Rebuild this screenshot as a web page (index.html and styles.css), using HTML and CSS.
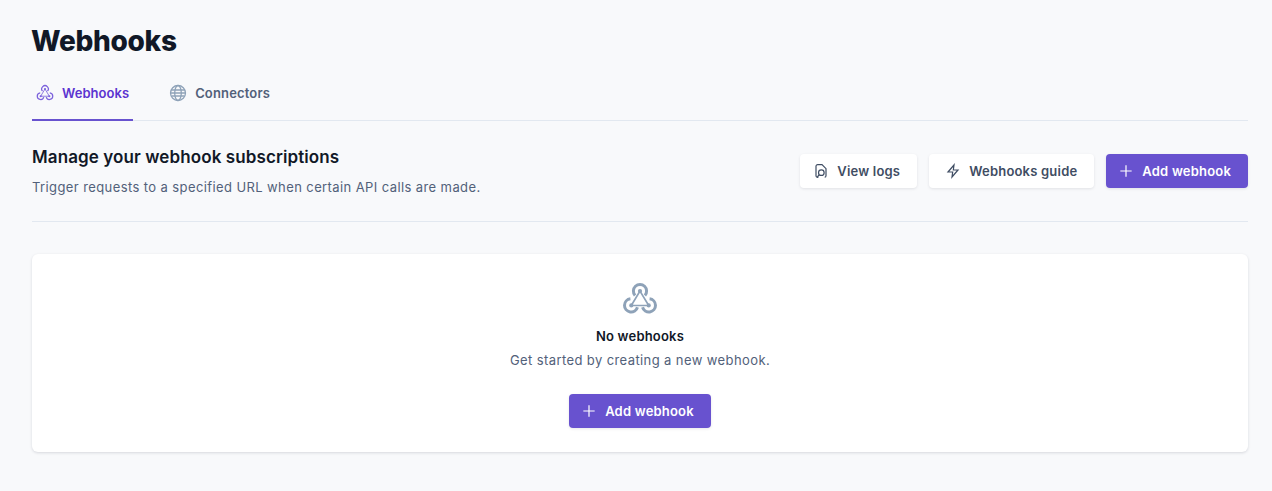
FILE: index.html
```html
<!DOCTYPE html>
<html lang="en">
<head>
<meta charset="utf-8">
<title>Webhooks</title>
<link rel="stylesheet" href="styles.css">
</head>
<body>
<svg class="defs" width="0" height="0" aria-hidden="true">
  <symbol id="hook" viewBox="0 0 24 24">
    <path d="M8.7 9.6a4.4 4.4 0 1 1 6.6 0" />
    <path d="M5.6 11.9a4.4 4.4 0 1 0 4.7 5.6" />
    <path d="M18.4 11.9a4.4 4.4 0 1 1-4.7 5.6" />
    <path class="hook-inner" d="M12 6.7 6.2 16.3h11.6z" />
    <circle class="hook-dot" cx="12" cy="6.7" r="1.4" />
    <circle class="hook-dot" cx="6.2" cy="16.3" r="1.4" />
    <circle class="hook-dot" cx="17.8" cy="16.3" r="1.4" />
  </symbol>
</svg>
<main class="page">
  <h1 class="title">Webhooks</h1>
  <nav class="tabs">
    <a class="tab tab-active">
      <svg class="tab-icon"><use href="#hook"/></svg>
      <span>Webhooks</span>
    </a>
    <a class="tab">
      <svg class="tab-icon" viewBox="0 0 24 24"><circle cx="12" cy="12" r="10"/><path d="M2 12h20M3.2 8h17.6M3.2 16h17.6"/><ellipse cx="12" cy="12" rx="4.4" ry="10"/></svg>
      <span>Connectors</span>
    </a>
  </nav>
  <header class="section-head">
    <div class="section-text">
      <h2 class="section-title">Manage your webhook subscriptions</h2>
      <p class="section-sub">Trigger requests to a specified URL when certain API calls are made.</p>
    </div>
    <div class="actions">
      <button class="btn btn-white btn-log">
        <svg class="btn-icon" viewBox="0 0 24 24"><path d="M8 21.5H7a2.5 2.5 0 0 1-2.5-2.5V5A2.5 2.5 0 0 1 7 2.5h6.5l6 6V19a2.5 2.5 0 0 1-2 2.4"/><circle cx="12.5" cy="14.5" r="4.2"/><path d="M9.5 17.5 6.5 21"/></svg>
        View logs
      </button>
      <button class="btn btn-white btn-wide">
        <svg class="btn-icon" viewBox="0 0 24 24"><path d="M13.5 3 4.5 13.5h7l-1 7.5 9-10.5h-7z"/></svg>
        Webhooks guide
      </button>
      <button class="btn btn-primary">
        <svg class="btn-icon" viewBox="0 0 24 24"><path d="M12 3.5v17M3.5 12h17"/></svg>
        Add webhook
      </button>
    </div>
  </header>
  <section class="card">
    <svg class="empty-icon"><use href="#hook"/></svg>
    <h3 class="empty-title">No webhooks</h3>
    <p class="empty-sub">Get started by creating a new webhook.</p>
    <button class="btn btn-primary empty-btn">
      <svg class="btn-icon" viewBox="0 0 24 24"><path d="M12 3.5v17M3.5 12h17"/></svg>
      Add webhook
    </button>
  </section>
</main>
</body>
</html>
```
FILE: styles.css
```css
* { box-sizing: border-box; }
html, body { margin: 0; height: 100%; }
body {
  background: #f8f9fb;
  font-family: Inter, "Liberation Sans", sans-serif;
  color: #0f172a;
}
.defs { position: absolute; }
.page { padding: 25px 24px 0 32px; }
.title {
  margin: 0 0 0 -1px;
  font-size: 28px;
  line-height: 32px;
  font-weight: 800;
  letter-spacing: -0.3px;
  color: #111827;
}
.tabs {
  display: flex;
  gap: 32px;
  margin-top: 8px;
  height: 56px;
  border-bottom: 1px solid #e2e8f0;
}
.tab {
  display: flex;
  align-items: center;
  gap: 8px;
  height: 56px;
  padding: 2px 4px 0;
  font-size: 13px;
  font-weight: 600;
  letter-spacing: 0.15px;
  color: #52617a;
  border-bottom: 2px solid transparent;
}
.tab-active { color: #5b34d0; border-bottom-color: #6852cf; letter-spacing: 0.05px; }
.tab-icon {
  width: 18px;
  height: 18px;
  fill: none;
  stroke: #8ea2b8;
  stroke-width: 1.7;
}
.tab-active .tab-icon { stroke: #7c62dc; }
.hook-inner { stroke-width: 1.1; }
.hook-dot { fill: currentColor; stroke: none; }
.tab-icon, .empty-icon { color: #8ea2b8; }
.tab-active .tab-icon { color: #7c62dc; }
.section-head {
  display: flex;
  justify-content: space-between;
  align-items: center;
  height: 101px;
  border-bottom: 1px solid #e2e8f0;
}
.section-title {
  margin: 0;
  font-size: 17px;
  line-height: 24px;
  font-weight: 600;
  letter-spacing: 0.1px;
  color: #111827;
}
.section-sub {
  margin: 8px 0 0;
  font-size: 13px;
  line-height: 20px;
  letter-spacing: 0.4px;
  color: #52617a;
}
.actions { display: flex; gap: 12px; }
.btn {
  display: inline-flex;
  align-items: center;
  justify-content: center;
  gap: 8px;
  height: 34px;
  padding: 0 17px 0 12px;
  border: 0;
  border-radius: 4px;
  font: 600 13px/20px Inter, "Liberation Sans", sans-serif;
  letter-spacing: 0.2px;
  box-shadow: 0 1px 3px rgba(15, 23, 42, 0.1);
}
.btn-log { padding-left: 13px; }
.btn-wide { padding-left: 16px; }
.btn-white { background: #fff; color: #3f4d63; }
.btn-primary { background: #6852cf; color: #fff; }
.btn-icon {
  width: 16px;
  height: 16px;
  fill: none;
  stroke: currentColor;
  stroke-width: 1.8;
  flex: none;
}
.card {
  display: flex;
  flex-direction: column;
  align-items: center;
  height: 198px;
  margin-top: 32px;
  padding-top: 27px;
  background: #fff;
  border-radius: 6px;
  box-shadow: 0 1px 3px rgba(15, 23, 42, 0.14);
}
.empty-icon {
  width: 36px;
  height: 36px;
  fill: none;
  stroke: #8ea2b8;
  stroke-width: 2;
}
.empty-title {
  margin: 9px 0 0;
  font-size: 13px;
  line-height: 20px;
  font-weight: 600;
  letter-spacing: 0.2px;
  color: #111827;
}
.empty-sub {
  margin: 4px 0 0;
  font-size: 13px;
  line-height: 20px;
  letter-spacing: 0.4px;
  color: #52617a;
}
.empty-btn { margin-top: 24px; }
```
